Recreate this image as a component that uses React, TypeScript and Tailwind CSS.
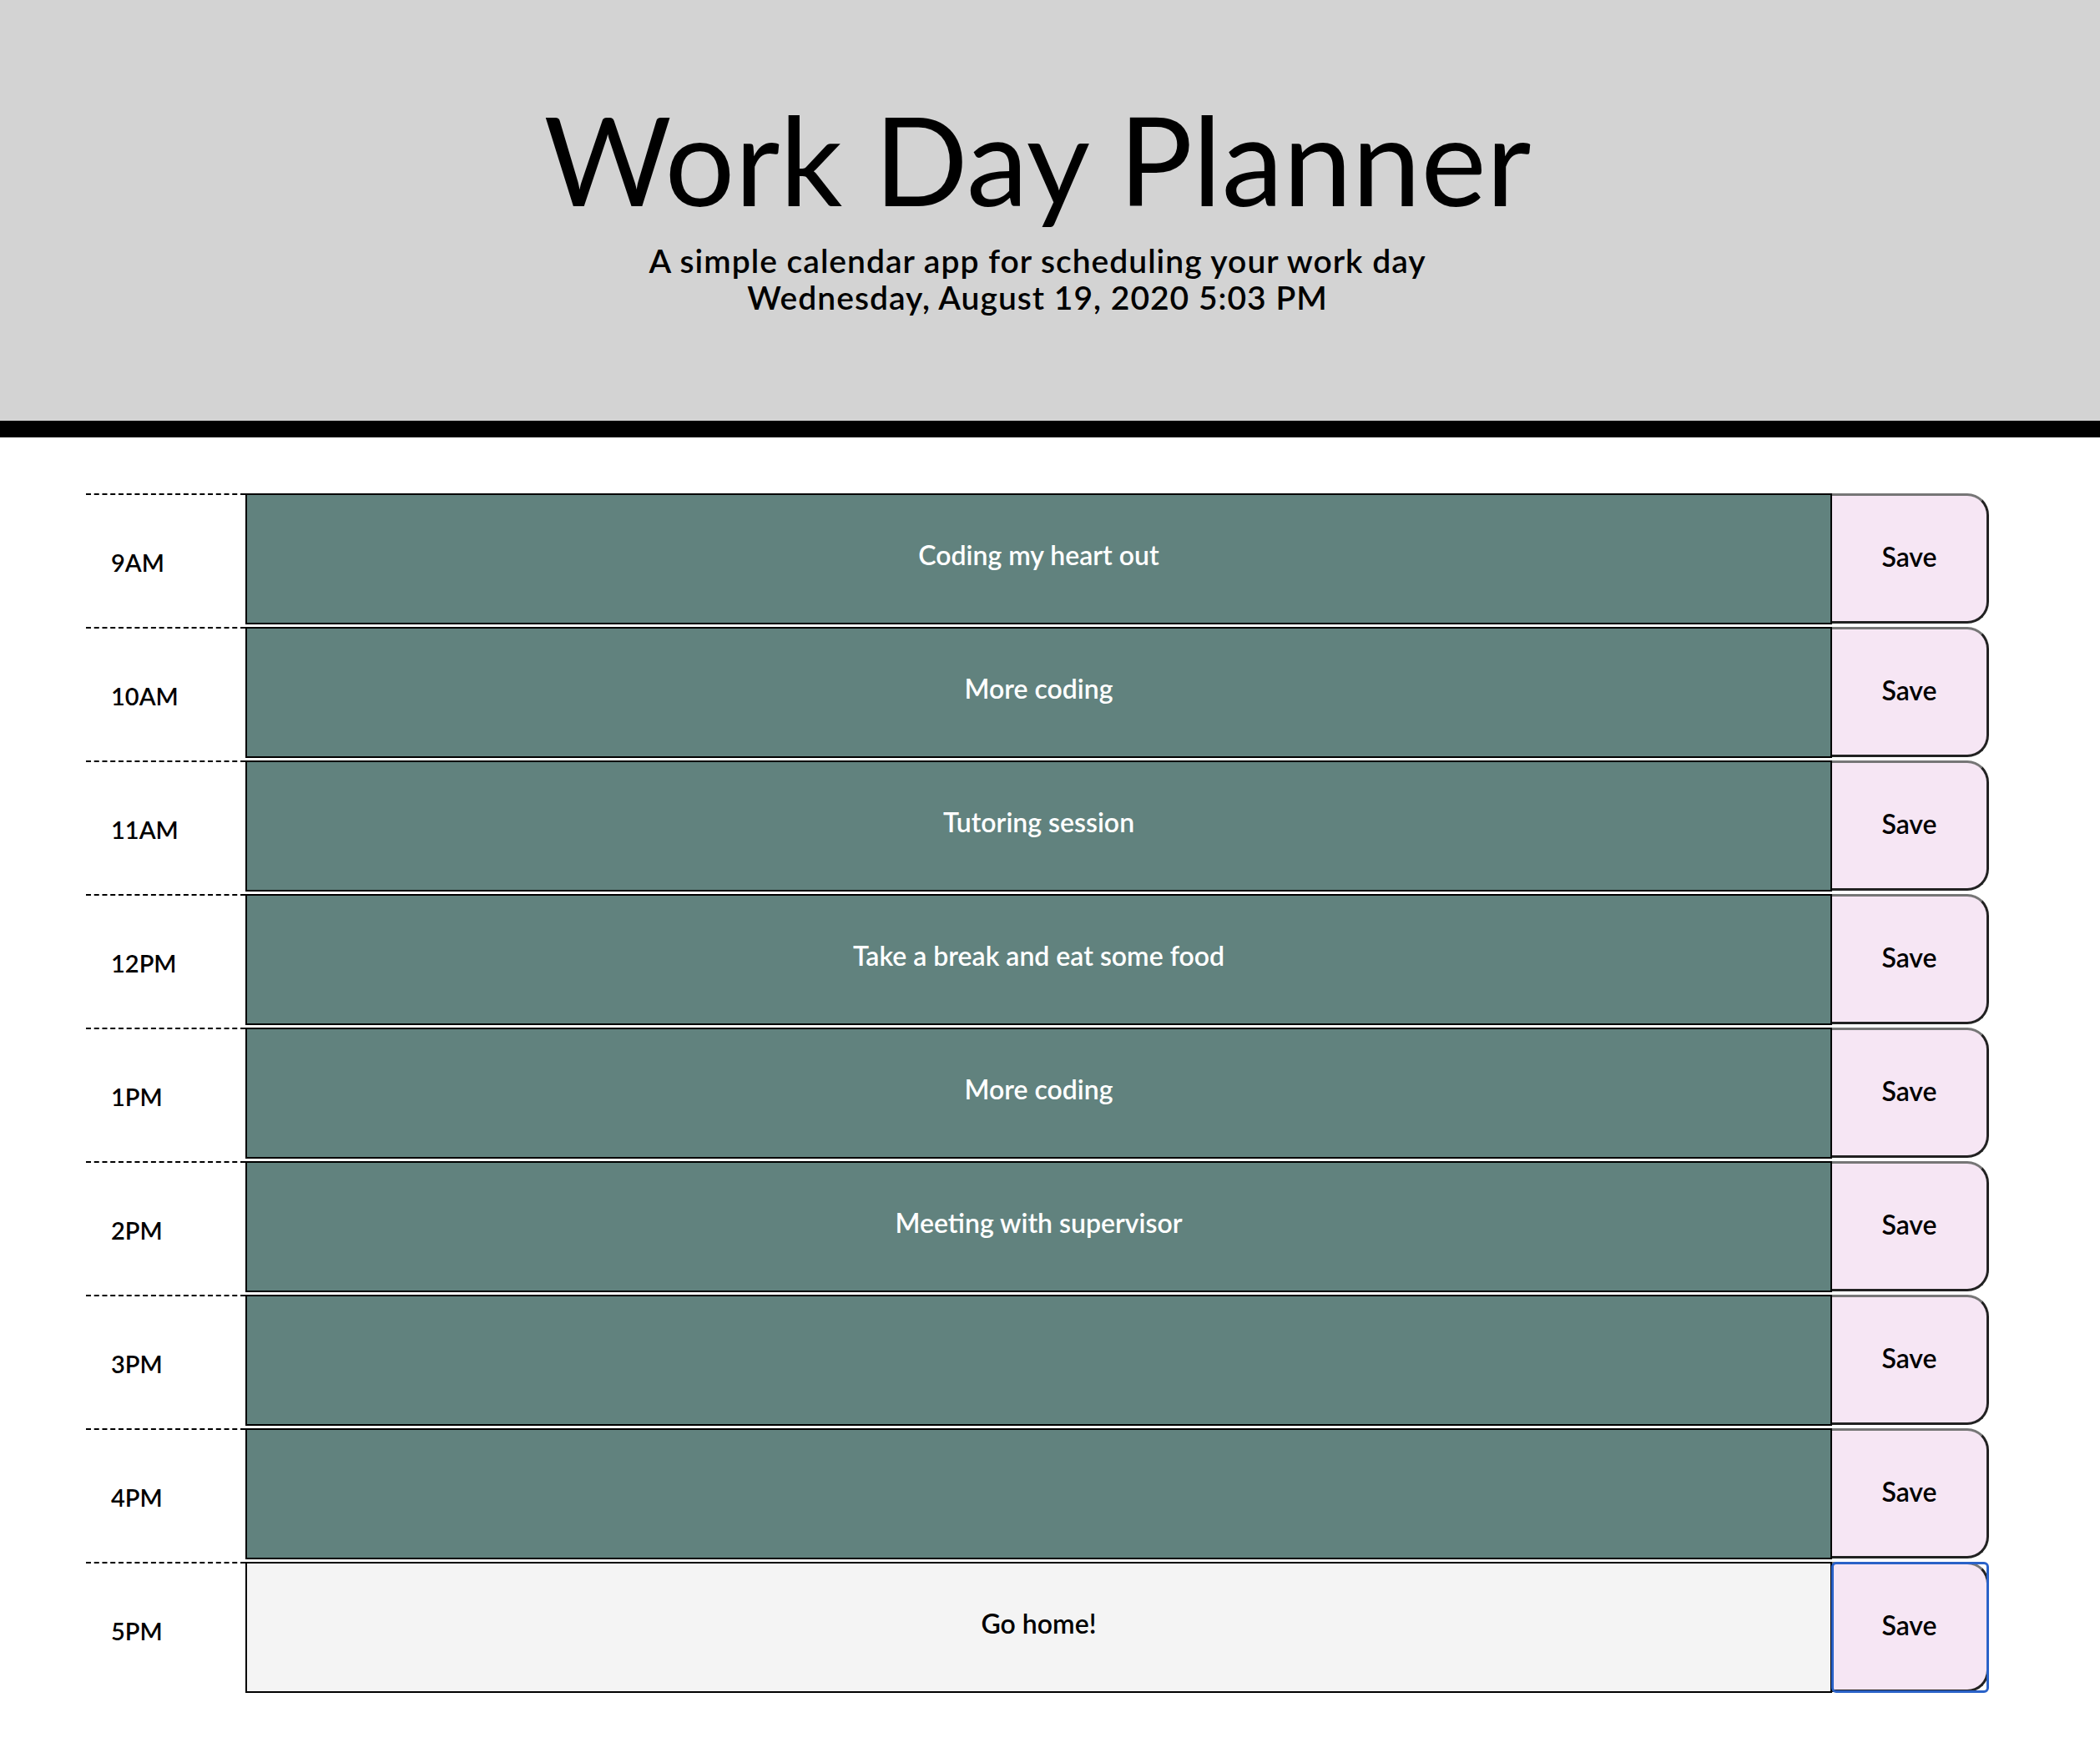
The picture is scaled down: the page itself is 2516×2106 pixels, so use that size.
const font = "font-['Lato','Noto_Sans',sans-serif]";

type Block = { hour: string; text: string; past: boolean };

const blocks: Block[] = [
  { hour: "9AM", text: "Coding my heart out", past: true },
  { hour: "10AM", text: "More coding", past: true },
  { hour: "11AM", text: "Tutoring session", past: true },
  { hour: "12PM", text: "Take a break and eat some food", past: true },
  { hour: "1PM", text: "More coding", past: true },
  { hour: "2PM", text: "Meeting with supervisor", past: true },
  { hour: "3PM", text: "", past: true },
  { hour: "4PM", text: "", past: true },
  { hour: "5PM", text: "Go home!", past: false },
];

const TimeBlock = ({ block, focused }: { block: Block; focused?: boolean }) => (
  <div className="flex h-[160px]">
    {/* hour column: dashed top rule */}
    <div className="w-[191px] h-full border-t-2 border-dashed border-black pl-[30px] pt-[4px] flex items-center">
      <span className="text-[29px] font-semibold text-black">{block.hour}</span>
    </div>

    <textarea
      readOnly
      defaultValue={block.text}
      className={
        block.past
          ? "w-[1901px] h-[157px] border-2 border-black bg-[#61827e] text-white text-center text-[32px] font-semibold leading-[48px] pt-[48px] resize-none outline-none"
          : "w-[1901px] h-[157px] border-2 border-black bg-[#f4f4f4] text-black text-center text-[32px] font-semibold leading-[48px] pt-[48px] resize-none outline-none"
      }
    />

    <div className="relative w-[188px] h-[156px]">
      <button className="w-full h-full bg-[#f6e6f4] border-[3px] border-l-0 border-t-[#767676] border-r-[#222] border-b-[#222] rounded-r-[26px] text-[32px] font-semibold text-black pb-[4px]">
        Save
      </button>
      {focused && (
        <div className="absolute -left-[1px] top-0 w-[189px] h-[157px] border-[3px] border-[#2a62c8] rounded-[6px] pointer-events-none" />
      )}
    </div>
  </div>
);

export default function App() {
  return (
    <div className={`w-full min-h-[2106px] bg-white ${font}`}>
      <header className="h-[524px] bg-[#d3d3d3] border-b-[20px] border-black">
        <div className="w-[2486px] flex flex-col items-center pt-[116px]">
          <h1 className="text-[148px] leading-none font-normal text-black">Work Day Planner</h1>
          <p className="mt-[26px] text-[39px] leading-[44px] tracking-[1px] font-semibold text-black text-center">
            A simple calendar app for scheduling your work day
            <br />
            Wednesday, August 19, 2020 5:03 PM
          </p>
        </div>
      </header>

      <main className="ml-[103px] w-[2280px] pt-[67px]">
        {blocks.map((b, i) => (
          <TimeBlock key={b.hour} block={b} focused={i === blocks.length - 1} />
        ))}
      </main>
    </div>
  );
}
